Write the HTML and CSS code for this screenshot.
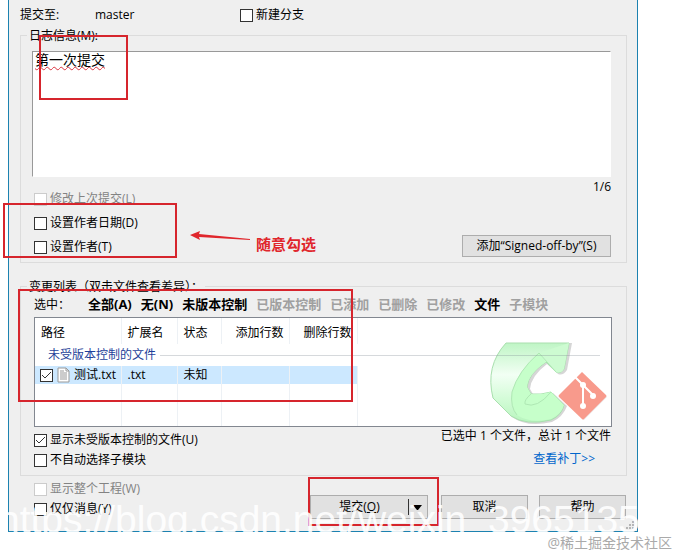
FILE: index.html
```html
<!DOCTYPE html>
<html lang="zh-CN">
<head>
    <meta charset="UTF-8">
    <meta name="viewport" content="width=device-width, initial-scale=1.0">
    <title>提交</title>
    <link rel="stylesheet" href="styles.css">
</head>
<body>
    <form class="dialog">
        <div class="branch-row">
            <span class="branch-label">提交至:</span>
            <span class="branch-name">master</span>
            <label class="check"><input type="checkbox">新建分支</label>
        </div>

        <fieldset class="group">
            <legend><label for="message">日志信息(M):</label></legend>
            <div class="message-body">
                <textarea id="message" class="message" spellcheck="false">第一次提交</textarea>
                <div class="columns">
                    <div class="author-options">
                        <label class="check disabled"><input type="checkbox" disabled>修改上次提交(L)</label>
                        <label class="check"><input type="checkbox">设置作者日期(D)</label>
                        <label class="check"><input type="checkbox">设置作者(T)</label>
                    </div>
                    <div class="message-side">
                        <span class="counter">1/6</span>
                        <button type="button" class="button signoff">添加“Signed-off-by”(S)</button>
                    </div>
                </div>
            </div>
        </fieldset>

        <fieldset class="group changes">
            <legend>变更列表（双击文件查看差异）：</legend>
            <div class="changes-body">
                <div class="filters">
                    <span class="filters-label">选中：</span>
                    <a href="#">全部(A)</a>
                    <a href="#">无(N)</a>
                    <a href="#">未版本控制</a>
                    <a href="#" class="off">已版本控制</a>
                    <a href="#" class="off">已添加</a>
                    <a href="#" class="off">已删除</a>
                    <a href="#" class="off">已修改</a>
                    <a href="#">文件</a>
                    <a href="#" class="off">子模块</a>
                </div>

                <div class="file-list">
                    <svg class="logo" viewBox="0 0 120 84" width="120" height="84" aria-hidden="true">
                        <defs>
                            <linearGradient id="green" x1="0" y1="0" x2="0" y2="1">
                                <stop offset="0" stop-color="#bff5c5"/>
                                <stop offset="0.4" stop-color="#f2fff4"/>
                                <stop offset="0.7" stop-color="#d4fcd8"/>
                                <stop offset="1" stop-color="#b8f5be"/>
                            </linearGradient>
                        </defs>
                        <path d="M19 1 H83 L78 28 Q74 34 69 32 L58 22 Q42 34 41 47 L44 52 Q54 54 64 51 L78 64 Q74 75 63 80 Q38 86 23 75 L5 57 Q-3 25 19 1Z" fill="#bbb" opacity="0.6"/>
                        <path d="M17 1 H80 L75 27 Q72 32 67 30 L57 20 Q39 32 38 45 L42 52 Q52 53 62 50 L75 63 Q73 73 62 78 Q37 84 22 74 L4 56 Q-4 24 17 1Z" fill="url(#green)" stroke="#a9dfae"/>
                        <path d="M50 11 Q29 29 23 50 Q21 65 28 73 Q42 82 62 77 Q73 71 75 63 L62 50 Q52 53 42 52 L38 45 Q39 32 57 20Z" fill="#c6ffca"/>
                        <path d="M50 11 L80 1 L75 27 Q72 32 67 30Z" fill="#cdfbd1"/>
                        <path d="M28 73 Q21 65 23 50 Q29 29 50 11 L67 30 M42 52 Q35 58 36 62 Q48 67 62 50" fill="none" stroke="#afe8b4"/>
                        <path d="M95 34 L118 55 L95 78 L72 55Z" fill="#999" opacity="0.2"/>
                        <path d="M93 30 L117 53 Q118 54 117 55 L95 77 Q94 78 93 77 L70 55 Q69 54 70 53 L93 30Z" fill="#f89a8c"/>
                        <path d="M86 35 L94 43 L104 53 M94 43 V64" fill="none" stroke="#fff" stroke-width="2"/>
                        <circle cx="94" cy="43" r="3" fill="#fff"/>
                        <circle cx="104" cy="54" r="3" fill="#fff"/>
                        <circle cx="94" cy="64" r="3" fill="#fff"/>
                    </svg>
                    <table>
                        <colgroup>
                            <col class="col-path"><col class="col-ext"><col class="col-state"><col class="col-lines"><col class="col-lines"><col>
                        </colgroup>
                        <thead>
                            <tr>
                                <th>路径</th>
                                <th>扩展名</th>
                                <th>状态</th>
                                <th class="num">添加行数</th>
                                <th class="num">删除行数</th>
                                <td></td>
                            </tr>
                        </thead>
                        <tbody>
                            <tr class="section">
                                <th colspan="6"><span class="section-title">未受版本控制的文件</span></th>
                            </tr>
                            <tr class="file">
                                <td>
                                    <label class="check">
                                        <input type="checkbox" checked>
                                        <svg width="13" height="16" viewBox="0 0 13 16" aria-hidden="true">
                                            <path d="M1 1 H9 L12 4 V15 H1Z" fill="#fff" stroke="#999"/>
                                            <path d="M9 1 V4 H12 M3 4 H7 M3 6 H10 M3 8 H10 M3 10 H10 M3 12 H10" fill="none" stroke="#999"/>
                                        </svg>
                                        测试.txt
                                    </label>
                                </td>
                                <td>.txt</td>
                                <td>未知</td>
                                <td></td>
                                <td></td>
                                <td></td>
                            </tr>
                            <tr class="blank"><td></td><td></td><td></td><td></td><td></td><td></td></tr>
                        </tbody>
                    </table>
                </div>

                <div class="columns">
                    <div class="list-options">
                        <label class="check"><input type="checkbox" checked>显示未受版本控制的文件(U)</label>
                        <label class="check"><input type="checkbox">不自动选择子模块</label>
                    </div>
                    <div class="summary">
                        <span>已选中 1 个文件，总计 1 个文件</span>
                        <a href="#" class="patch-link">查看补丁&gt;&gt;</a>
                    </div>
                </div>
            </div>
            <div class="mark mark-list"></div>
        </fieldset>

        <div class="footer">
            <div class="footer-options">
                <label class="check disabled"><input type="checkbox" disabled>显示整个工程(W)</label>
                <label class="check"><input type="checkbox">仅仅消息(Y)</label>
            </div>
            <div class="buttons">
                <div class="split">
                    <button type="submit" class="button commit">提交(<u>O</u>)</button>
                    <button type="button" class="button more" aria-label="更多">
                        <svg width="9" height="5" viewBox="0 0 9 5" aria-hidden="true"><path d="M0 0 H9 L5 5 H4Z"/></svg>
                    </button>
                    <div class="mark mark-commit"></div>
                </div>
                <button type="button" class="button">取消</button>
                <button type="button" class="button">帮助</button>
            </div>
        </div>

        <svg class="grip" width="9" height="9" viewBox="0 0 9 9" aria-hidden="true">
            <path d="M6 0h2v2h-2z M3 3h2v2h-2z M6 3h2v2h-2z M0 6h2v2h-2z M3 6h2v2h-2z M6 6h2v2h-2z" fill="#b5b5b5"/>
        </svg>
        <div class="mark mark-message"></div>
        <div class="mark mark-author"></div>
        <svg class="arrow" width="61" height="12" viewBox="0 0 61 12" aria-hidden="true">
            <path d="M0 4 L10 0 L9 3 L60 8 V9 L9 6 L10 9Z" fill="#e0262c"/>
        </svg>
        <span class="note">随意勾选</span>
        <div class="url-stamp">https://blog.csdn.net/weixin_3965135</div>
    </form>
    <p class="credit">@稀土掘金技术社区</p>
</body>
</html>
```
FILE: styles.css
```css
body {
    margin: 0;
    background-color: #fff;
    color: #000;
    font-family: "Open Sans", "Noto Sans CJK SC", sans-serif;
    font-size: 12px;
    line-height: 16px;
}

.dialog {
    position: relative;
    margin: 0 38px 0 8px;
    padding: 0 10px 0 11px;
    background-color: #efefef;
    border: 1px solid #1c82b0;
    border-top: none;
}

a {
    color: inherit;
    text-decoration: none;
}

.branch-row {
    display: flex;
    align-items: center;
    height: 26px;
    padding-top: 4px;
    box-sizing: border-box;
}

.branch-label {
    width: 75px;
}

.branch-name {
    width: 145px;
}

/* check boxes */
.check {
    display: flex;
    align-items: center;
    gap: 3px;
    white-space: nowrap;
}

.check input {
    appearance: none;
    flex: none;
    width: 13px;
    height: 13px;
    margin: 0;
    background-color: #fff;
    border: 1px solid #333;
}

.check input:checked {
    background-image: url("data:image/svg+xml,%3Csvg xmlns='http://www.w3.org/2000/svg' viewBox='0 0 11 11'%3E%3Cpath d='M1 5 L4 8 L10 2' fill='none' stroke='%23333'/%3E%3C/svg%3E");
}

.check.disabled {
    color: #838383;
}

.check.disabled input {
    border-color: #ccc;
}

/* group boxes */
.group {
    position: relative;
    min-width: 0;
    margin: 0;
    padding: 0;
    border: 1px solid #dcdcdc;
}

.group legend {
    margin-left: 6px;
    padding: 2px 2px 0;
}

.message-body {
    padding: 7px 15px 3px 11px;
}

.message {
    display: block;
    width: 100%;
    height: 126px;
    padding: 0 2px;
    box-sizing: border-box;
    background-color: #fff;
    border: 1px solid #999;
    border-right-color: #fff;
    border-bottom-color: #fff;
    resize: none;
    outline: none;
    font-family: "Noto Sans CJK SC", sans-serif;
    font-size: 14px;
    line-height: 14px;
    text-decoration: underline wavy #d9333f 1px;
}

.columns {
    display: flex;
    justify-content: space-between;
}

.author-options {
    padding: 10px 0 0 2px;
}

.author-options .check {
    height: 24px;
}

.message-side {
    display: flex;
    flex-direction: column;
    justify-content: space-between;
    align-items: flex-end;
    padding-bottom: 2px;
}

.counter {
    line-height: 20px;
}

.button {
    width: 87px;
    height: 24px;
    padding: 0;
    box-sizing: border-box;
    background-color: #e1e1e1;
    border: 1px solid #adadad;
    color: inherit;
    font: inherit;
}

.signoff {
    width: 149px;
    height: 22px;
}

/* change list */
.changes {
    margin-top: 14px;
}

.changes-body {
    padding: 0 14px 5px 13px;
}

.filters {
    display: flex;
    gap: 9px;
    height: 19px;
    font-size: 13px;
    font-weight: bold;
    line-height: 19px;
    white-space: nowrap;
}

.filters-label {
    width: 45px;
    font-size: 12px;
    font-weight: normal;
}

.filters .off {
    color: #a0a0a0;
}

.file-list {
    position: relative;
    margin-top: 3px;
    background-color: #fff;
    border: 1px solid #828790;
}

.logo {
    position: absolute;
    right: 2px;
    bottom: 0;
}

table {
    position: relative;
    width: 100%;
    border-collapse: collapse;
    table-layout: fixed;
}

.col-path {
    width: 86px;
}

.col-ext {
    width: 56px;
}

.col-state {
    width: 44px;
}

.col-lines {
    width: 68px;
}

th,
td {
    height: 18px;
    padding: 0 0 0 6px;
    border-right: 1px solid #edf1f5;
    font-weight: normal;
    text-align: left;
    white-space: nowrap;
}

thead th {
    height: 26px;
    padding-top: 4px;
    box-sizing: border-box;
}

.num {
    padding-right: 5px;
    text-align: right;
}

td:last-child,
.section th {
    border-right: none;
}

.section th {
    height: 22px;
    padding: 0 11px 0 13px;
    color: #1e3f99;
}

.section-title {
    display: flex;
    align-items: center;
    gap: 4px;
}

.section-title::after {
    content: "";
    flex: 1;
    height: 1px;
    background-color: rgba(120, 130, 140, 0.3);
}

.file td:not(:last-child) {
    background-color: #cce8ff;
}

.file .check {
    gap: 4px;
    margin-left: -1px;
}

.blank td {
    height: 42px;
}

.list-options {
    padding-top: 3px;
}

.list-options .check,
.footer-options .check {
    height: 20px;
}

.summary {
    display: flex;
    flex-direction: column;
    gap: 5px;
    padding-right: 1px;
    line-height: 18px;
}

.patch-link {
    align-self: flex-end;
    margin-right: 16px;
    color: #0066cc;
}

.footer {
    display: flex;
    justify-content: space-between;
    padding: 3px 1px 12px 14px;
}

.buttons {
    display: flex;
    align-items: flex-end;
    gap: 11px;
}

.split {
    position: relative;
    display: flex;
    width: 118px;
    margin-right: 2px;
}

.commit {
    flex: 1;
    border-right: none;
}

.more {
    display: flex;
    align-items: center;
    width: 20px;
    border-left: none;
}

.more::before {
    content: "";
    width: 1px;
    height: 16px;
    margin-right: 4px;
    background-color: #333;
}

.grip {
    position: absolute;
    right: 2px;
    bottom: 1px;
}

/* annotations drawn over the dialog */
.mark {
    position: absolute;
    box-sizing: border-box;
    border: 2px solid #d6252d;
    pointer-events: none;
}

.mark-message {
    top: 35px;
    left: 30px;
    width: 89px;
    height: 65px;
}

.mark-author {
    top: 203px;
    left: -6px;
    width: 174px;
    height: 55px;
}

.mark-list {
    top: -6px;
    left: -3px;
    width: 335px;
    height: 113px;
}

.mark-commit {
    top: -18px;
    left: -2px;
    width: 131px;
    height: 49px;
}

.arrow {
    position: absolute;
    top: 231px;
    left: 181px;
}

.note {
    position: absolute;
    top: 236px;
    left: 247px;
    color: #e0262c;
    font-size: 15px;
    font-weight: bold;
}

.url-stamp {
    position: absolute;
    right: -1px;
    bottom: -11px;
    left: -11px;
    overflow: hidden;
    color: rgba(255, 255, 255, 0.9);
    font-family: "Liberation Sans", sans-serif;
    font-size: 39px;
    line-height: 44px;
    white-space: nowrap;
    pointer-events: none;
}

.credit {
    margin: 2px 4px 0 0;
    color: #aaa;
    font-size: 14px;
    line-height: 18px;
    text-align: right;
}
```
